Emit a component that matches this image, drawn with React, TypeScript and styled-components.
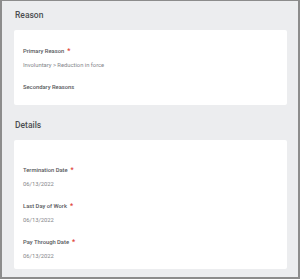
import React from "react";
import styled, { createGlobalStyle } from "styled-components";

const GlobalStyle = createGlobalStyle`
  html, body {
    margin: 0;
    padding: 0;
    background: #ffffff;
  }
  * {
    box-sizing: border-box;
  }
`;

const Frame = styled.div`
  width: 300px;
  height: 279px;
  background: #ecedef;
  border: 2px solid #8c8c8c;
  border-top-width: 1px;
  padding: 0 11px 0 12px;
  font-family: Roboto, "Liberation Sans", sans-serif;
  overflow: hidden;
`;

const SectionTitle = styled.div<{ $top: number }>`
  padding-top: ${(p) => p.$top}px;
  height: ${(p) => p.$top + 29}px;
  line-height: 29px;
  padding-left: 1px;
  font-size: 8.5px;
  font-weight: 500;
  color: #4b4d50;
`;

const Card = styled.div<{ $padTop: number; $padBottom: number }>`
  background: #ffffff;
  border-radius: 2px;
  padding: ${(p) => p.$padTop}px 10px ${(p) => p.$padBottom}px 9px;
  display: flex;
  flex-direction: column;
  gap: 12px;
`;

const Field = styled.div`
  display: flex;
  flex-direction: column;
  gap: 4px;
`;

const Label = styled.div`
  height: 10px;
  line-height: 10px;
  font-size: 5.8px;
  font-weight: 500;
  color: #55575b;
  white-space: nowrap;
`;

const Required = styled.span`
  color: #de3b2f;
  margin-left: 3px;
  font-size: 7px;
`;

const Value = styled.div`
  height: 10px;
  line-height: 10px;
  font-size: 5.8px;
  color: #83858a;
  white-space: nowrap;
`;

type FieldData = { label: string; value?: string; required?: boolean };

const reasonFields: FieldData[] = [
  { label: "Primary Reason", value: "Involuntary > Reduction in force", required: true },
  { label: "Secondary Reasons" },
];

const detailFields: FieldData[] = [
  { label: "Termination Date", value: "06/13/2022", required: true },
  { label: "Last Day of Work", value: "06/13/2022", required: true },
  { label: "Pay Through Date", value: "06/13/2022", required: true },
];

function FieldList({ fields }: { fields: FieldData[] }) {
  return (
    <>
      {fields.map((f) => (
        <Field key={f.label}>
          <Label>
            {f.label}
            {f.required && <Required>*</Required>}
          </Label>
          {f.value && <Value>{f.value}</Value>}
        </Field>
      ))}
    </>
  );
}

export default function App() {
  return (
    <>
      <GlobalStyle />
      <Frame>
        <SectionTitle $top={0}>Reason</SectionTitle>
        <Card $padTop={16} $padBottom={13}>
          <FieldList fields={reasonFields} />
        </Card>
        <SectionTitle $top={6}>Details</SectionTitle>
        <Card $padTop={25} $padBottom={8}>
          <FieldList fields={detailFields} />
        </Card>
      </Frame>
    </>
  );
}
